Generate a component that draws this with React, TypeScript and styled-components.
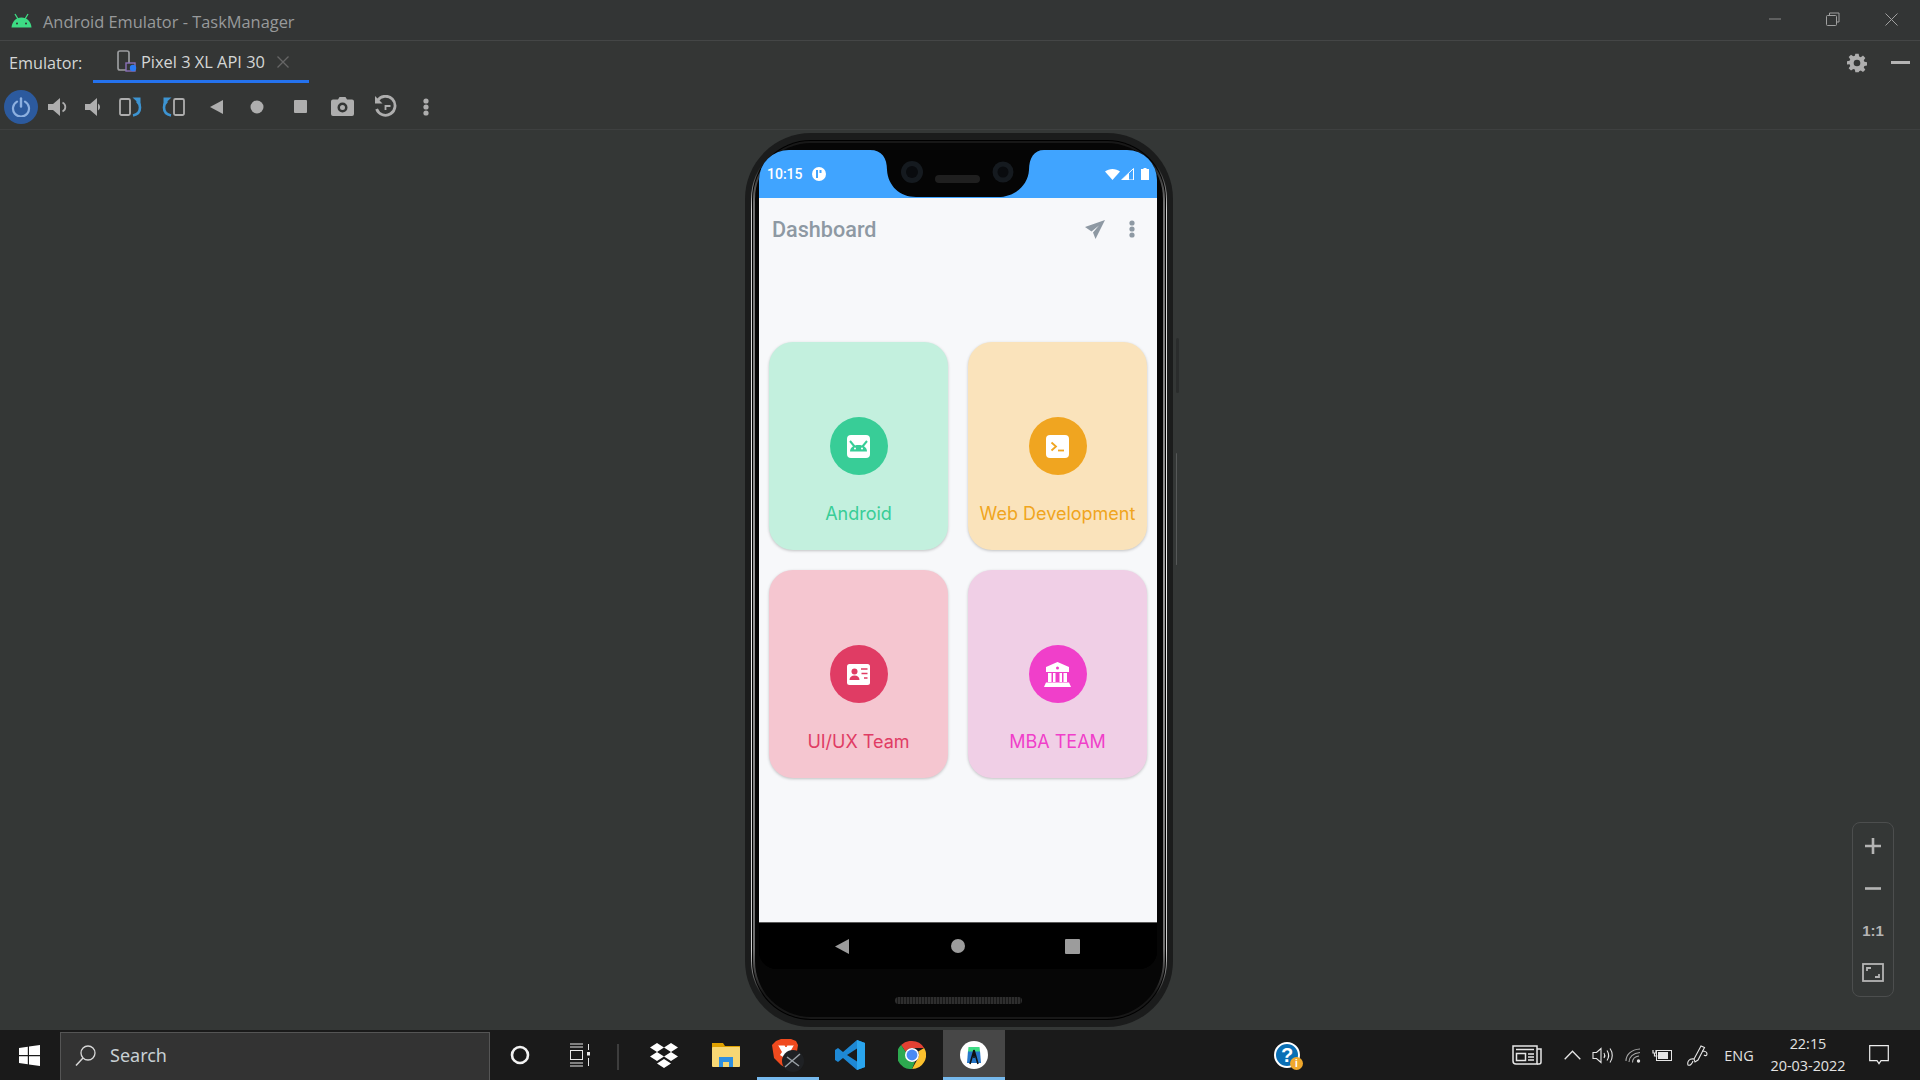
import React, { FC, ReactNode } from "react";
import styled, { createGlobalStyle } from "styled-components";

const GlobalStyle = createGlobalStyle`
  html, body {
    margin: 0;
    padding: 0;
    width: 1920px;
    height: 1080px;
    overflow: hidden;
    background: #343736;
  }
`

const Frame = styled.div`
  display: flex;
  flex-direction: column;
  width: 1920px;
  height: 1080px;
  font-family: "Open Sans", "Noto Sans", sans-serif;
`
const TitleBar = styled.header`
  display: flex;
  align-items: center;
  height: 40px;
  padding-left: 11px;
  background: #333535;
  border-bottom: 1px solid #444646;
`
const TitleText = styled.div`
  margin: 2px 0 0 11px;
  font-size: 16.4px;
  color: #989a9b;
`
const WindowControls = styled.div`
  display: flex;
  margin-left: auto;
  padding-bottom: 2px;
`
const WindowButton = styled.div`
  display: flex;
  align-items: center;
  justify-content: center;
  width: 58px;
  height: 38px;
`
const TabRow = styled.div`
  display: flex;
  height: 43px;
  background: #343635;
`
const TabLabel = styled.div`
  display: flex;
  align-items: center;
  width: 93px;
  height: 43px;
  padding-left: 9px;
  box-sizing: border-box;
  font-size: 16.2px;
  color: #d4d6d6;
`
const Tab = styled.div`
  display: flex;
  align-items: center;
  width: 216px;
  height: 42px;
  padding: 2px 0 0 24px;
  box-sizing: border-box;
  border-bottom: 3px solid #2472ee;
  font-size: 16.4px;
  color: #d4d6d6;
`
const TabName = styled.span`
  margin-left: 4px;
`
const TabClose = styled.span`
  display: flex;
  margin-left: 12px;
`
const TabActions = styled.div`
  display: flex;
  align-items: center;
  margin-left: auto;
  padding: 0 10px 0 0;
  gap: 24px;
`
const ToolRow = styled.div`
  display: flex;
  align-items: center;
  height: 46px;
  padding-left: 3px;
  box-sizing: border-box;
  background: #343635;
  border-bottom: 1px solid #3e4040;
`
const ToolSlot = styled.div<{ $w: number }>`
  display: flex;
  align-items: center;
  justify-content: center;
  width: ${(p) => p.$w}px;
  height: 36px;
`
const PowerButton = styled.div`
  display: flex;
  align-items: center;
  justify-content: center;
  width: 34px;
  height: 34px;
  border-radius: 50%;
  background: #2c5a9e;
`
const Main = styled.main`
  position: relative;
  flex: 1;
  display: flex;
  justify-content: center;
  align-items: flex-start;
  padding: 3px 2px 0 0;
  background: #343736;
`
const Shell = styled.div`
  position: relative;
  width: 428px;
  height: 894px;
  padding: 6px;
  box-sizing: border-box;
  border-radius: 66px;
  background: #1b1c1c;
`
const SideButton = styled.div<{ $top: number; $h: number; $w: number; $color: string }>`
  position: absolute;
  left: 431px;
  top: ${(p) => p.$top}px;
  width: ${(p) => p.$w}px;
  height: ${(p) => p.$h}px;
  border-radius: 2px;
  background: ${(p) => p.$color};
`
const Rim = styled.div`
  height: 100%;
  padding: 1px;
  box-sizing: border-box;
  border-radius: 60px;
  background: linear-gradient(180deg, #1b1c1c 0%, #1b1c1c 3%, #cfcfcf 8%, #f4f4f4 50%, #cfcfcf 92%, #1b1c1c 97%);
`
const RimGap = styled.div`
  height: 100%;
  padding: 1px;
  box-sizing: border-box;
  border-radius: 59px;
  background: #000;
`
const RimLine = styled.div`
  height: 100%;
  padding: 2px;
  box-sizing: border-box;
  border-radius: 58px;
  background: linear-gradient(180deg, #181818 0%, #181818 2%, #6e6e6e 7%, #9a9a9a 50%, #6e6e6e 92%, #181818 97%);
`
const Bezel = styled.div`
  display: flex;
  flex-direction: column;
  align-items: center;
  height: 100%;
  padding: 7px 6px 0 4px;
  box-sizing: border-box;
  border-radius: 56px;
  background: #060606;
`
const Screen = styled.div`
  position: relative;
  display: flex;
  flex-direction: column;
  width: 398px;
  height: 819px;
  overflow: hidden;
  border-radius: 30px 30px 18px 18px;
  background: #000;
`
const StatusBar = styled.div`
  display: flex;
  align-items: center;
  height: 48px;
  flex-shrink: 0;
  padding: 0 8px;
  box-sizing: border-box;
  background: #40a4ff;
  font-family: Roboto, sans-serif;
  font-size: 14px;
  font-weight: 500;
  color: #fff;
`
const StatusIcons = styled.div`
  display: flex;
  align-items: center;
  margin-left: auto;
  gap: 1px;
`
const StatusBadge = styled.span`
  display: flex;
  margin-left: 9px;
`
const Notch = styled.svg`
  position: absolute;
  left: 111px;
  top: 0;
`
const AppArea = styled.div`
  height: 725px;
  flex-shrink: 0;
  padding: 0 10px 0 10px;
  box-sizing: border-box;
  background: #f7f8fa;
  border-bottom: 1px solid #5a5a5a;
`
const AppBar = styled.div`
  display: flex;
  align-items: center;
  height: 62px;
  padding: 0 0 0 3px;
  font-family: Roboto, sans-serif;
  font-size: 21.6px;
  font-weight: 500;
  color: #8e99a3;
`
const AppBarActions = styled.div`
  display: flex;
  align-items: center;
  margin-left: auto;
  gap: 24px;
  padding-right: 12px;
`
const CardGrid = styled.div`
  display: grid;
  grid-template-columns: 179px 179px;
  grid-auto-rows: 208px;
  gap: 20px;
  margin-top: 82px;
`
const Card = styled.div<{ $bg: string; $fg: string }>`
  display: flex;
  flex-direction: column;
  align-items: center;
  padding-top: 75px;
  box-sizing: border-box;
  border-radius: 24px;
  background: ${(p) => p.$bg};
  color: ${(p) => p.$fg};
  box-shadow: 0 1px 3px rgba(0, 0, 0, 0.22);
`
const CardCircle = styled.div<{ $fg: string }>`
  display: flex;
  align-items: center;
  justify-content: center;
  width: 58px;
  height: 58px;
  border-radius: 50%;
  background: ${(p) => p.$fg};
`
const CardLabel = styled.div`
  margin-top: 28px;
  font-family: Inter, sans-serif;
  font-size: 18px;
  line-height: 22px;
  white-space: nowrap;
`
const NavBar = styled.div`
  display: flex;
  align-items: center;
  justify-content: space-between;
  flex: 1;
  padding: 0 77px 0 76px;
  background: #000;
`
const NavHome = styled.div`
  width: 14px;
  height: 14px;
  margin-left: 2px;
  border-radius: 50%;
  background: #9c9c9c;
`
const NavRecent = styled.div`
  width: 15px;
  height: 15px;
  border-radius: 1px;
  background: #9c9c9c;
`
const ChinSpeaker = styled.div`
  width: 127px;
  height: 7px;
  margin-top: 28px;
  border-radius: 4px;
  background: repeating-linear-gradient(90deg, #2e2e2e 0, #2e2e2e 2px, #181818 2px, #181818 3px);
`
const ZoomPanel = styled.div`
  position: absolute;
  right: 26px;
  top: 692px;
  display: flex;
  flex-direction: column;
  width: 42px;
  height: 175px;
  padding: 2px 0;
  box-sizing: border-box;
  border: 1px solid #4c4e4e;
  border-radius: 8px;
`
const ZoomItem = styled.div`
  flex: 1;
  display: flex;
  align-items: center;
  justify-content: center;
  font-family: "Liberation Sans", sans-serif;
  font-size: 15px;
  font-weight: 700;
  color: #b4b4b4;
`
const Taskbar = styled.footer`
  display: flex;
  align-items: stretch;
  height: 50px;
  background: #1a1a1a;
`
const StartSlot = styled.div`
  display: flex;
  align-items: center;
  justify-content: center;
  width: 60px;
  padding-right: 2px;
  box-sizing: border-box;
`
const SearchBox = styled.div`
  display: flex;
  align-items: center;
  width: 430px;
  margin-top: 2px;
  padding: 0 0 3px 14px;
  box-sizing: border-box;
  background: #333;
  border: 1px solid #555;
  border-bottom: none;
  font-family: "Noto Sans", sans-serif;
  font-size: 18px;
  color: #c8d0d4;
`
const SearchText = styled.span`
  margin-left: 14px;
`
const TaskSlot = styled.div<{ $w?: number; $active?: boolean; $running?: boolean }>`
  display: flex;
  align-items: center;
  justify-content: center;
  width: ${(p) => p.$w ?? 62}px;
  box-sizing: border-box;
  background: ${(p) => (p.$active ? "#474747" : "transparent")};
  border-bottom: 3px solid ${(p) => (p.$active || p.$running ? "#76b9ed" : "transparent")};
  border-top: 3px solid transparent;
`
const Divider = styled.div`
  width: 23px;
  display: flex;
  justify-content: center;
  padding: 14px 8px 0 0;
  box-sizing: border-box;
`
const DividerLine = styled.div`
  width: 2px;
  height: 26px;
  background: #3d3d3d;
`
const HelpSlot = styled.div`
  display: flex;
  align-items: center;
  justify-content: center;
  width: 60px;
  margin-left: 252px;
`
const HelpMark = styled.div`
  position: relative;
  display: flex;
  align-items: center;
  justify-content: center;
  width: 26px;
  height: 26px;
  box-sizing: border-box;
  border-radius: 50%;
  border: 2px solid #fff;
  background: #0a6fb5;
  font-family: "Liberation Sans", sans-serif;
  font-size: 20px;
  font-weight: 700;
  color: #fff;
`
const HelpBadge = styled.span`
  position: absolute;
  right: -5px;
  bottom: -4px;
  display: flex;
  align-items: center;
  justify-content: center;
  width: 13px;
  height: 13px;
  border-radius: 50%;
  background: #f0a82c;
  font-size: 10px;
  color: #fff;
`
const Tray = styled.div`
  display: flex;
  align-items: stretch;
  margin-left: auto;
  padding-right: 17px;
  color: #e2e2e2;
  font-family: "Open Sans", sans-serif;
  font-size: 14.4px;
`
const TrayItem = styled.div<{ $w: number }>`
  display: flex;
  flex-direction: column;
  align-items: center;
  justify-content: center;
  width: ${(p) => p.$w}px;
`
const ClockLine = styled.div`
  line-height: 22px;
  white-space: nowrap;
`

const Ico: FC<{ w: number; h?: number; vb?: string; children: ReactNode }> = ({ w, h, vb, children }) => (
  <svg width={w} height={h ?? w} viewBox={vb ?? `0 0 ${w} ${h ?? w}`}>{children}</svg>
)

const GRAY = "#aeaeae"

const AndroidLogo = () => (
  <Ico w={21} h={15} vb="0 0 21 15">
    <path d="M0.5 14.5C1 8.5 5 4.5 10.5 4.5S20 8.5 20.5 14.5Z" fill="#3ddc84" />
    <path d="M4 1l3 5M17 1l-3 5" stroke="#3ddc84" strokeWidth="1.3" />
    <circle cx="6" cy="10.5" r="1" fill="#333" />
    <circle cx="15" cy="10.5" r="1" fill="#333" />
  </Ico>
)

const RestoreIcon = () => (
  <Ico w={14}>
    <path d="M3.5 3V1h9.5v9h-2.5" fill="none" stroke="#a0a0a0" />
    <rect x="0.5" y="3.5" width="10" height="10" rx="1" fill="none" stroke="#a0a0a0" />
  </Ico>
)

const DeviceIcon = () => (
  <Ico w={20} h={24}>
    <rect x="1" y="1" width="11" height="19" rx="2" fill="none" stroke="#9a9c9e" strokeWidth="1.7" />
    <rect x="9" y="13" width="9" height="8" fill="#343635" stroke="#8a6fb8" strokeWidth="1.4" />
    <circle cx="16" cy="18" r="3.2" fill="#2a7bf5" />
  </Ico>
)

const GearIcon = () => (
  <Ico w={20} vb="0 0 24 24">
    <path
      fill={GRAY}
      fillRule="evenodd"
      d="M10 1h4l.6 3.2 1.9.8 2.7-1.9 2.8 2.8-1.9 2.7.8 1.9 3.1.5v4l-3.1.5-.8 1.9 1.9 2.7-2.8 2.8-2.7-1.9-1.9.8L14 23h-4l-.6-3.1-1.9-.8-2.7 1.9-2.8-2.8 1.9-2.7-.8-1.9L0 13.900v-4l3.100-.5.8-1.900L2 4.900l2.800-2.800 2.700 1.900 1.900-.8ZM12 8a4 4 0 1 0 0 8 4 4 0 0 0 0-8Z"
    />
  </Ico>
)

const PowerIcon = () => (
  <Ico w={20}>
    <path d="M6 4.600A8 8 0 1 0 14 4.600" fill="none" stroke="#8db0e0" strokeWidth="2.200" strokeLinecap="round" />
    <path d="M10 1.500v8" stroke="#8db0e0" strokeWidth="2.400" strokeLinecap="round" />
  </Ico>
)

const VolumeUpIcon = () => (
  <Ico w={21} h={18}>
    <path d="M0 6h5l7-6v18l-7-6H0Z" fill={GRAY} />
    <path d="M14.500 4.500a5 5 0 0 1 0 9" fill="none" stroke={GRAY} strokeWidth="1.800" />
  </Ico>
)

const VolumeDownIcon = () => (
  <Ico w={16} h={18}>
    <path d="M0 6h5l7-6v18l-7-6H0Z" fill={GRAY} />
    <path d="M13 5.500a4 4 0 0 1 0 7Z" fill={GRAY} />
  </Ico>
)

const RotateIcon: FC<{ flip?: boolean }> = ({ flip }) => (
  <Ico w={23} h={20}>
    <g transform={flip ? "translate(23 0) scale(-1 1)" : undefined}>
      <rect x="1" y="2" width="10" height="16" rx="1.500" fill="none" stroke={GRAY} strokeWidth="1.800" />
      <path d="M14 18.500C19 17.500 21 14.500 21 10.500C21 8 20 6 18 4" fill="none" stroke="#3d94d2" strokeWidth="2.600" />
      <path d="M13.500 0.500H21.500V8Z" fill="#3d94d2" />
    </g>
  </Ico>
)

const CameraIcon = () => (
  <Ico w={23} h={19}>
    <path
      fill={GRAY}
      fillRule="evenodd"
      d="M7 2.500 8.500 0h6L16 2.500h5a2 2 0 0 1 2 2V17a2 2 0 0 1-2 2H2a2 2 0 0 1-2-2V4.500a2 2 0 0 1 2-2ZM11.500 5.500a5 5 0 1 0 0 10 5 5 0 0 0 0-10ZM11.500 8a2.500 2.500 0 1 1 0 5 2.500 2.500 0 0 1 0-5Z"
    />
  </Ico>
)

const HistoryIcon = () => (
  <Ico w={23}>
    <path d="M3.600 5.500A9.500 9.500 0 1 1 2.600 14" fill="none" stroke={GRAY} strokeWidth="2.800" />
    <path d="M1 1 8.500 8.500H1Z" fill={GRAY} />
    <path d="M11.500 15v-4h5" fill="none" stroke={GRAY} strokeWidth="1.800" />
  </Ico>
)

const MoreDots: FC<{ color: string }> = ({ color }) => (
  <Ico w={6} h={18}>
    <circle cx="3" cy="3" r="2.600" fill={color} />
    <circle cx="3" cy="9" r="2.600" fill={color} />
    <circle cx="3" cy="15" r="2.600" fill={color} />
  </Ico>
)

const SendIcon = () => (
  <Ico w={20} h={19}>
    <path d="M0 7 20 0 10.500 19 8 12.500 14 5.500 6.500 11.500Z" fill="#8e99a3" />
  </Ico>
)

const WifiGlyph = () => (
  <Ico w={15} h={12}>
    <path d="M0 3.500C4 0 11 0 15 3.500L7.500 12Z" fill="#fff" />
  </Ico>
)

const SignalGlyph = () => (
  <Ico w={19} h={12}>
    <path d="M12.500 0.500V12H0.500Z" fill="none" stroke="#fff" />
    <path d="M8 5V12H0.500Z" fill="#fff" />
  </Ico>
)

const BatteryGlyph = () => (
  <Ico w={8} h={12}>
    <path d="M2.500 0h3v1H8v11H0V1h2.500Z" fill="#fff" />
  </Ico>
)

const BadgeGlyph = () => (
  <Ico w={14}>
    <circle cx="7" cy="7" r="7" fill="#fff" />
    <rect x="4" y="3" width="2" height="8" fill="#40a4ff" />
    <path d="M7.500 3h2v3h-2Z" fill="#40a4ff" />
  </Ico>
)

const BackTriangle = () => (
  <Ico w={14} h={15}>
    <path d="M14 0V15L0 7.500Z" fill="#9c9c9c" />
  </Ico>
)

const AndroidTile: FC<{ fg: string }> = ({ fg }) => (
  <Ico w={23}>
    <rect width="23" height="23" rx="4" fill="#fff" />
    <path d="M3 16.500c0-4 3.500-6.500 8.500-6.500s8.500 2.500 8.500 6.500Z" fill={fg} />
    <path d="M3 6 7.500 11.500M20 6 15.500 11.500" stroke={fg} strokeWidth="2" />
    <circle cx="8" cy="13.500" r="1" fill="#fff" />
    <circle cx="15" cy="13.500" r="1" fill="#fff" />
  </Ico>
)

const TerminalTile: FC<{ fg: string }> = ({ fg }) => (
  <Ico w={23}>
    <rect width="23" height="23" rx="4" fill="#fff" />
    <path d="M5.500 7.500 10 11.500 5.500 15.500" fill="none" stroke={fg} strokeWidth="1.800" />
    <path d="M12 15.500h6" stroke={fg} strokeWidth="1.800" />
  </Ico>
)

const IdCardIcon: FC<{ fg: string }> = ({ fg }) => (
  <Ico w={23} h={21}>
    <rect width="23" height="21" rx="2.500" fill="#fff" />
    <circle cx="7.500" cy="7.500" r="3" fill={fg} />
    <path d="M2.500 16c0-3 2-4.500 5-4.500s5 1.500 5 4.500Z" fill={fg} />
    <path d="M14 5h6.500M14.500 9.500h6M17 14h3.500" stroke={fg} strokeWidth="1.600" />
  </Ico>
)

const BankIcon: FC<{ fg: string }> = ({ fg }) => (
  <Ico w={27} h={25}>
    <path d="M13.500 0 25 5v5H2V5Z" fill="#fff" />
    <circle cx="13.500" cy="6" r="1.500" fill={fg} />
    <path d="M4 11h3.500v9H4ZM9 11h2.500v9H9ZM15.500 11H18v9h-2.500ZM19.500 11H23v9h-3.500Z" fill="#fff" />
    <path d="M2 20.500h23L27 25H0Z" fill="#fff" />
  </Ico>
)

const WindowsLogo = () => (
  <Ico w={21}>
    <path d="M0 3 8.800 1.800V10H0ZM10 1.600 21 0V10H10ZM0 11.200H8.800V19.200L0 18ZM10 11.200H21V21L10 19.400Z" fill="#fff" />
  </Ico>
)

const SearchGlyph = () => (
  <Ico w={21}>
    <circle cx="13" cy="8" r="7" fill="none" stroke="#d8d8d8" strokeWidth="1.300" />
    <path d="M8 13 1 20.500" stroke="#d8d8d8" strokeWidth="1.500" />
  </Ico>
)

const CortanaRing = () => (
  <Ico w={20}>
    <circle cx="10" cy="10" r="8" fill="none" stroke="#f2f2f2" strokeWidth="2.600" />
  </Ico>
)

const TaskViewGlyph = () => (
  <Ico w={22} h={24}>
    <path d="M1 1h13M1 4h13M1 20h13M1 23h13" stroke="#e8e8e8" strokeWidth="1" />
    <rect x="1.500" y="7.500" width="12" height="9" fill="none" stroke="#e8e8e8" />
    <path d="M19.500 1v6M19.500 15v8" stroke="#e8e8e8" />
    <rect x="18" y="9" width="3" height="3.500" fill="#e8e8e8" />
  </Ico>
)

const DropboxIcon = () => (
  <Ico w={30} h={27}>
    <path
      d="M8 1l7 4.500L8 10 1 5.500ZM22 1l7 4.500L22 10l-7-4.500ZM8 10l7 4.500L8 19l-7-4.500ZM22 10l7 4.500L22 19l-7-4.500ZM15 17l7 4.500L15 26l-7-4.500Z"
      fill="#fff"
    />
  </Ico>
)

const FolderIcon = () => (
  <Ico w={28} h={24}>
    <path d="M0 0h11l2 3h15v6H0Z" fill="#dfa100" />
    <rect x="0" y="4" width="28" height="20" rx="1" fill="#f7d774" />
    <path d="M7 14h14v10h-4v-5h-6v5H7Z" fill="#2e8fe0" />
  </Ico>
)

const BraveIcon = () => (
  <Ico w={32} h={33}>
    <path d="M4 2 9 0h10l5 2 2 4-2 13-5 7-5 3-5-3-7-7L0 6Z" fill="#f04a1e" />
    <path d="M6 6h7l1 2 1-2h7l-4 7 2 3-6 4-6-4 2-3Z" fill="#fff" />
    <path d="M6 6h7l1 2 1-2h7" fill="none" stroke="#f04a1e" strokeWidth="1" />
    <circle cx="21" cy="22" r="11" fill="#1f2124" />
    <path d="M13 28 28 15M15 18l12 9" stroke="#9aa0a6" strokeWidth="1.500" />
  </Ico>
)

const VsCodeIcon = () => (
  <Ico w={30} h={30}>
    <path d="M22 0 30 3V27L22 30 8 18 3 22 0 20V10L3 8 8 12Z" fill="#1e88d4" />
    <path d="M22 0 30 3V27L22 30Z" fill="#2aa5ee" />
    <path d="M22 8.500 12 15 22 21.500Z" fill="#1a1a1a" />
  </Ico>
)

const ChromeIcon = () => (
  <Ico w={28} h={28} vb="0 0 36 36">
    <path d="M18 0A18 18 0 0 1 33.600 9H18A9 9 0 0 0 10 14L4 5A18 18 0 0 1 18 0Z" fill="#e34133" />
    <path d="M33.600 9A18 18 0 0 1 18 36L26 22A9 9 0 0 0 26 13.500Z" fill="#fbc02d" />
    <path d="M18 36A18 18 0 0 1 4 5L10 14 14 26A9 9 0 0 0 22 26Z" fill="#2da94f" />
    <circle cx="18" cy="18" r="9" fill="#fff" />
    <circle cx="18" cy="18" r="7" fill="#4a8af4" />
  </Ico>
)

const StudioIcon = () => (
  <Ico w={28} h={28}>
    <circle cx="14" cy="14" r="14" fill="#fff" />
    <path d="M8 10h12l1 12H7Z" fill="#2677c9" />
    <path d="M8.500 6h11l.5 4.500H8Z" fill="#3ddc84" />
    <path d="M14 9 10 23M14 9l4 14M14 9v8" stroke="#111" strokeWidth="1.600" />
  </Ico>
)

const NewsIcon = () => (
  <Ico w={30} h={20}>
    <path d="M1 1h24v18H4a3 3 0 0 1-3-3Z" fill="none" stroke="#e6e6e6" strokeWidth="1.500" />
    <path d="M25 4h4v13a2 2 0 0 1-2 2h-2" fill="none" stroke="#e6e6e6" strokeWidth="1.500" />
    <rect x="4.500" y="8.500" width="9" height="7" fill="none" stroke="#e6e6e6" strokeWidth="1.500" />
    <path d="M4 4.500h18M16 9h6M16 12h6M16 15h6" stroke="#e6e6e6" strokeWidth="1.500" />
  </Ico>
)

const ChevronIcon = () => (
  <Ico w={17} h={10}>
    <path d="M0.700 9.300 8.500 1.200 16.300 9.300" fill="none" stroke="#e6e6e6" strokeWidth="1.300" />
  </Ico>
)

const SpeakerIcon = () => (
  <Ico w={21} h={17}>
    <path d="M1 5.500h3.500L9 1.500v14l-4.500-4H1Z" fill="none" stroke="#e6e6e6" strokeWidth="1.100" />
    <path d="M12 6c1 1.500 1 3.500 0 5M15 3.500c2 3 2 7 0 10M18 1.500c3 4 3 10 0 14" fill="none" stroke="#e6e6e6" strokeWidth="1.100" />
  </Ico>
)

const WifiTray = () => (
  <Ico w={16}>
    <path d="M1 14C1 8 6 2.500 15 2M4 15C4 10 8 6 15 5.500M7.500 15.500C7.500 12 10 9.500 14 9" fill="none" stroke="#a8a8a8" strokeWidth="1.100" />
    <circle cx="13.500" cy="14" r="1.700" fill="#e6e6e6" />
  </Ico>
)

const BatteryTray = () => (
  <Ico w={21} h={14}>
    <rect x="4.500" y="2.500" width="15" height="10" fill="none" stroke="#e6e6e6" />
    <rect x="6" y="4" width="10" height="7" fill="#e6e6e6" />
    <path d="M1 2v3h3V2M2.500 5v3h3" fill="none" stroke="#e6e6e6" strokeWidth="1.200" />
  </Ico>
)

const PenIcon = () => (
  <Ico w={21}>
    <path d="M14 1 7 14l1 3 3-2 6.500-12.500Z" fill="none" stroke="#e6e6e6" strokeWidth="1.100" />
    <path d="M7 14C2 13 0 17 1 20c2 1 4-1 5-4M15 6c3 0 5 1 5 3s-2 2-3 1" fill="none" stroke="#e6e6e6" strokeWidth="1.100" />
  </Ico>
)

const NotifyIcon = () => (
  <Ico w={20} h={20}>
    <path d="M0.700 0.700h18.600v15H12l-2 3-2-3H0.700Z" fill="none" stroke="#ededed" strokeWidth="1.200" />
  </Ico>
)

const FitIcon = () => (
  <Ico w={22} h={19}>
    <rect x="1" y="1" width="20" height="17" fill="none" stroke="#b4b4b4" strokeWidth="1.800" />
    <path d="M5 8V5h4M17 11v3h-4" fill="none" stroke="#b4b4b4" strokeWidth="1.800" />
  </Ico>
)

const CARDS = [
  { label: "Android", bg: "#c3f0de", fg: "#38cd97", icon: <AndroidTile fg="#38cd97" /> },
  { label: "Web Development", bg: "#fae3bb", fg: "#f0a520", icon: <TerminalTile fg="#f0a520" /> },
  { label: "UI/UX Team", bg: "#f5c6d0", fg: "#e03c64", icon: <IdCardIcon fg="#e03c64" /> },
  { label: "MBA TEAM", bg: "#f0cfe6", fg: "#f03fca", icon: <BankIcon fg="#f03fca" /> },
]

const App: FC = () => (
  <Frame>
    <GlobalStyle />
    <TitleBar>
      <AndroidLogo />
      <TitleText>Android Emulator - TaskManager</TitleText>
      <WindowControls>
        <WindowButton>
          <Ico w={12} h={2}><path d="M0 1h12" stroke="#8c8c8c" /></Ico>
        </WindowButton>
        <WindowButton><RestoreIcon /></WindowButton>
        <WindowButton>
          <Ico w={13}><path d="M0.500 0.500 12.500 12.500M12.500 0.500 0.500 12.500" stroke="#a0a0a0" /></Ico>
        </WindowButton>
      </WindowControls>
    </TitleBar>

    <TabRow>
      <TabLabel>Emulator:</TabLabel>
      <Tab>
        <DeviceIcon />
        <TabName>Pixel 3 XL API 30</TabName>
        <TabClose>
          <Ico w={12}><path d="M0.500 0.500 11.500 11.500M11.500 0.500 0.500 11.500" stroke="#666" strokeWidth="1.300" /></Ico>
        </TabClose>
      </Tab>
      <TabActions>
        <GearIcon />
        <Ico w={19} h={3}><path d="M0 1.500h19" stroke="#b4b4b4" strokeWidth="3" /></Ico>
      </TabActions>
    </TabRow>

    <ToolRow>
      <ToolSlot $w={36}><PowerButton><PowerIcon /></PowerButton></ToolSlot>
      <ToolSlot $w={38}><VolumeUpIcon /></ToolSlot>
      <ToolSlot $w={31}><VolumeDownIcon /></ToolSlot>
      <ToolSlot $w={45}><RotateIcon /></ToolSlot>
      <ToolSlot $w={40}><RotateIcon flip /></ToolSlot>
      <ToolSlot $w={46}><Ico w={13} h={14}><path d="M13 0V14L0 7Z" fill={GRAY} /></Ico></ToolSlot>
      <ToolSlot $w={36}><Ico w={14}><circle cx="7" cy="7" r="6.500" fill={GRAY} /></Ico></ToolSlot>
      <ToolSlot $w={50}><Ico w={13}><rect width="13" height="13" rx="1" fill={GRAY} /></Ico></ToolSlot>
      <ToolSlot $w={34}><CameraIcon /></ToolSlot>
      <ToolSlot $w={52}><HistoryIcon /></ToolSlot>
      <ToolSlot $w={30}><MoreDots color={GRAY} /></ToolSlot>
    </ToolRow>

    <Main>
      <Shell>
        <SideButton $top={205} $h={55} $w={3} $color="#2a2c2c" />
        <SideButton $top={320} $h={112} $w={1} $color="#565858" />
        <Rim>
          <RimGap>
            <RimLine>
              <Bezel>
                <Screen>
                  <StatusBar>
                    10:15
                    <StatusBadge><BadgeGlyph /></StatusBadge>
                    <StatusIcons>
                      <WifiGlyph />
                      <SignalGlyph />
                      <BatteryGlyph />
                    </StatusIcons>
                  </StatusBar>
                  <Notch width="174" height="48" viewBox="0 0 174 48">
                    <path d="M0 0C12 0 17 8 17 20C18 36 30 47 46 47H128C144 47 158 36 159 20C159 8 164 0 174 0Z" fill="#050505" />
                    <circle cx="42" cy="22" r="11" fill="#151a1f" />
                    <circle cx="42" cy="22" r="6" fill="#090b0e" />
                    <circle cx="133" cy="22" r="10.500" fill="#151a1f" />
                    <circle cx="133" cy="22" r="5.500" fill="#090b0e" />
                    <rect x="65" y="25" width="45" height="8" rx="4" fill="#1f1f1f" />
                  </Notch>
                  <AppArea>
                    <AppBar>
                      Dashboard
                      <AppBarActions>
                        <SendIcon />
                        <MoreDots color="#8e99a3" />
                      </AppBarActions>
                    </AppBar>
                    <CardGrid>
                      {CARDS.map((c) => (
                        <Card key={c.label} $bg={c.bg} $fg={c.fg}>
                          <CardCircle $fg={c.fg}>{c.icon}</CardCircle>
                          <CardLabel>{c.label}</CardLabel>
                        </Card>
                      ))}
                    </CardGrid>
                  </AppArea>
                  <NavBar>
                    <BackTriangle />
                    <NavHome />
                    <NavRecent />
                  </NavBar>
                </Screen>
                <ChinSpeaker />
              </Bezel>
            </RimLine>
          </RimGap>
        </Rim>
      </Shell>

      <ZoomPanel>
        <ZoomItem><Ico w={16}><path d="M8 0v16M0 8h16" stroke="#b4b4b4" strokeWidth="2.600" /></Ico></ZoomItem>
        <ZoomItem><Ico w={16} h={3}><path d="M0 1.500h16" stroke="#b4b4b4" strokeWidth="2.600" /></Ico></ZoomItem>
        <ZoomItem>1:1</ZoomItem>
        <ZoomItem><FitIcon /></ZoomItem>
      </ZoomPanel>
    </Main>

    <Taskbar>
      <StartSlot><WindowsLogo /></StartSlot>
      <SearchBox>
        <SearchGlyph />
        <SearchText>Search</SearchText>
      </SearchBox>
      <TaskSlot $w={60}><CortanaRing /></TaskSlot>
      <TaskSlot $w={60}><TaskViewGlyph /></TaskSlot>
      <Divider><DividerLine /></Divider>
      <TaskSlot><DropboxIcon /></TaskSlot>
      <TaskSlot><FolderIcon /></TaskSlot>
      <TaskSlot $running><BraveIcon /></TaskSlot>
      <TaskSlot><VsCodeIcon /></TaskSlot>
      <TaskSlot><ChromeIcon /></TaskSlot>
      <TaskSlot $active><StudioIcon /></TaskSlot>
      <HelpSlot>
        <HelpMark>?<HelpBadge>i</HelpBadge></HelpMark>
      </HelpSlot>
      <Tray>
        <TrayItem $w={60}><NewsIcon /></TrayItem>
        <TrayItem $w={30}><ChevronIcon /></TrayItem>
        <TrayItem $w={30}><SpeakerIcon /></TrayItem>
        <TrayItem $w={31}><WifiTray /></TrayItem>
        <TrayItem $w={29}><BatteryTray /></TrayItem>
        <TrayItem $w={40}><PenIcon /></TrayItem>
        <TrayItem $w={44}>ENG</TrayItem>
        <TrayItem $w={94}>
          <ClockLine>22:15</ClockLine>
          <ClockLine>20-03-2022</ClockLine>
        </TrayItem>
        <TrayItem $w={48}><NotifyIcon /></TrayItem>
      </Tray>
    </Taskbar>
  </Frame>
)

export default App
